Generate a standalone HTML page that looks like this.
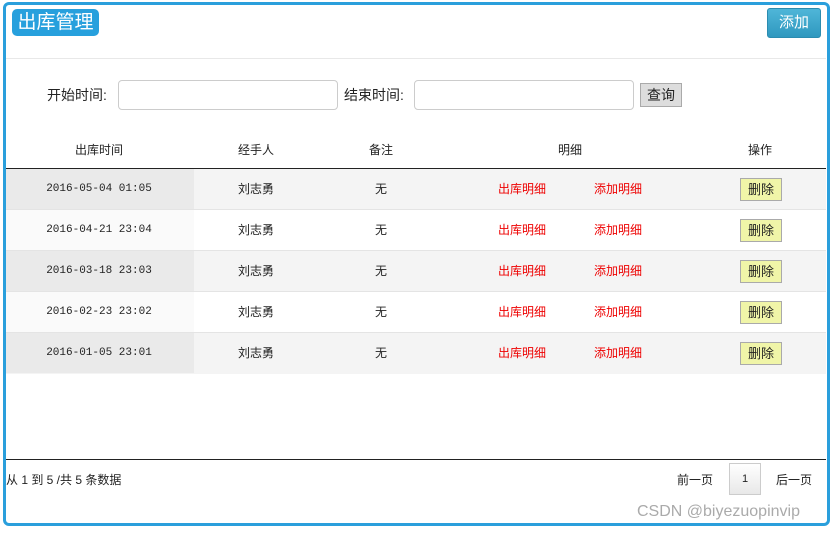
<!DOCTYPE html>
<html><head><meta charset="utf-8"><style>
*{margin:0;padding:0;box-sizing:border-box}
body{width:832px;height:533px;background:#fff;font-family:"Liberation Sans","Noto Sans CJK SC",sans-serif;position:relative;overflow:hidden;font-size:12px;color:#222}
.frame{position:absolute;left:3px;top:2px;width:827px;height:524px;border:3px solid #2a9fdc;border-radius:6px}
.abs{position:absolute}
.title{left:12px;top:9px;width:87px;height:27px;background:#27a0dd;border-radius:5px;color:#fff;font-size:19px;line-height:27px;text-align:center}
.add{left:767px;top:8px;width:54px;height:30px;background:linear-gradient(#4fb6d8,#2f98bf);border:1px solid #2b8cb0;border-radius:3px;color:#fff;font-size:15px;line-height:28px;text-align:center}
.sep{left:6px;top:58px;width:820px;height:1px;background:#e8e8e8}
.lbl{font-size:14px;top:85px}
.inp{top:80px;height:30px;border:1px solid #ccc;border-radius:4px;background:#fff}
.q{left:640px;top:83px;width:42px;height:24px;background:#ddd;border:1px solid #aaa;font-size:14px;line-height:22px;text-align:center}
.th{top:141px;font-size:12px;transform:translateX(-50%)}
.hl{left:6px;top:168px;width:820px;height:1px;background:#222}
.row{position:absolute;left:6px;width:820px;height:41px;border-bottom:1px solid #e4e4e4}
.row span{position:absolute;top:0;height:40px;line-height:40px;transform:translateX(-50%);white-space:nowrap}
.c0{position:absolute;left:0;top:0;width:188px;height:40px}
.red{color:#e00}
.dt{font-family:'Liberation Mono',monospace;font-size:11px}
.del{position:absolute;left:734px;top:9px;width:42px;height:23px;background:#f0f5a8;border:1px solid #aaa;font-size:13px;line-height:21px;text-align:center}
.bl{left:6px;top:459px;width:820px;height:1px;background:#222}
</style></head><body>
<div class="frame"></div>
<div class="abs title">出库管理</div>
<div class="abs add">添加</div>
<div class="abs sep"></div>
<div class="abs lbl" style="left:47px">开始时间:</div>
<div class="abs inp" style="left:118px;width:220px"></div>
<div class="abs lbl" style="left:344px">结束时间:</div>
<div class="abs inp" style="left:414px;width:220px"></div>
<div class="abs q">查询</div>
<div class="abs th" style="left:99px">出库时间</div>
<div class="abs th" style="left:256px">经手人</div>
<div class="abs th" style="left:381px">备注</div>
<div class="abs th" style="left:570px">明细</div>
<div class="abs th" style="left:760px">操作</div>
<div class="abs hl"></div>

<div class="row" style="top:169px;background:#f4f4f4"><div class="c0" style="background:#eaeaea"></div><span class="dt" style="left:93px">2016-05-04 01:05</span><span style="left:250px">刘志勇</span><span style="left:375px">无</span><span class="red" style="left:516px">出库明细</span><span class="red" style="left:612px">添加明细</span><div class="del">删除</div></div>
<div class="row" style="top:210px;background:#fff"><div class="c0" style="background:#fafafa"></div><span class="dt" style="left:93px">2016-04-21 23:04</span><span style="left:250px">刘志勇</span><span style="left:375px">无</span><span class="red" style="left:516px">出库明细</span><span class="red" style="left:612px">添加明细</span><div class="del">删除</div></div>
<div class="row" style="top:251px;background:#f4f4f4"><div class="c0" style="background:#eaeaea"></div><span class="dt" style="left:93px">2016-03-18 23:03</span><span style="left:250px">刘志勇</span><span style="left:375px">无</span><span class="red" style="left:516px">出库明细</span><span class="red" style="left:612px">添加明细</span><div class="del">删除</div></div>
<div class="row" style="top:292px;background:#fff"><div class="c0" style="background:#fafafa"></div><span class="dt" style="left:93px">2016-02-23 23:02</span><span style="left:250px">刘志勇</span><span style="left:375px">无</span><span class="red" style="left:516px">出库明细</span><span class="red" style="left:612px">添加明细</span><div class="del">删除</div></div>
<div class="row" style="top:333px;background:#f4f4f4;border-bottom:none"><div class="c0" style="background:#eaeaea"></div><span class="dt" style="left:93px">2016-01-05 23:01</span><span style="left:250px">刘志勇</span><span style="left:375px">无</span><span class="red" style="left:516px">出库明细</span><span class="red" style="left:612px">添加明细</span><div class="del">删除</div></div>

<div class="abs bl"></div>
<div class="abs" style="left:6px;top:471px">从 1 到 5 /共 5 条数据</div>
<div class="abs" style="left:677px;top:471px">前一页</div>
<div class="abs" style="left:729px;top:463px;width:32px;height:32px;border:1px solid #ccc;background:linear-gradient(#fff,#e8e8e8);text-align:center;line-height:30px;font-size:11px">1</div>
<div class="abs" style="left:776px;top:471px">后一页</div>
<div class="abs" style="left:637px;top:503px;font-size:16px;color:#aaa">CSDN @biyezuopinvip</div>
</body></html>
